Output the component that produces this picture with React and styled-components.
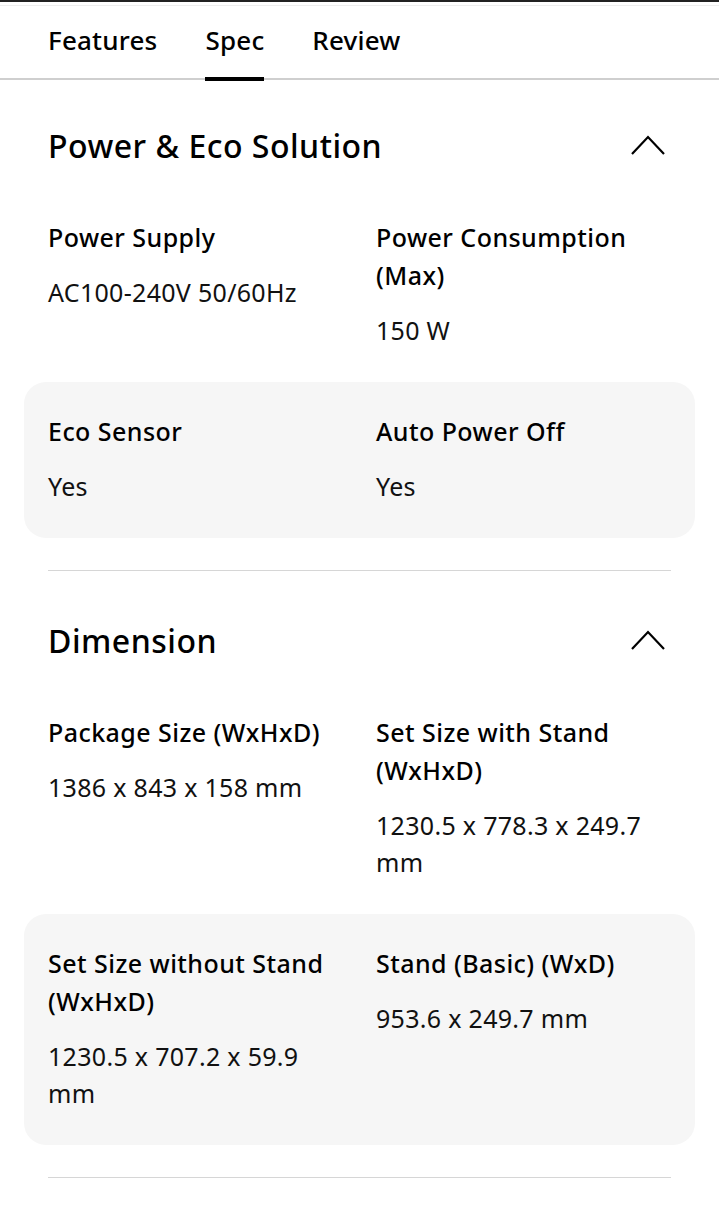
import React from "react";
import styled, { createGlobalStyle } from "styled-components";

const GlobalStyle = createGlobalStyle`
    body {
        margin: 0;
        background: #fff;
        font-family: "Noto Sans", Roboto, sans-serif;
        color: #000;
    }
`;

const Page = styled.div`
    width: 719px;
    border-top: 2px solid #222;
`;

const TabBar = styled.nav`
    display: flex;
    gap: 48px;
    padding: 0 48px;
    height: 75px;
    margin-top: 3px;
    border-top: 1px solid #eeeeee;
    border-bottom: 2px solid #cfcfcf;
    box-sizing: border-box;
`;

const Tab = styled.div`
    position: relative;
    display: flex;
    align-items: center;
    padding-bottom: 4px;
    font-size: 26px;
    font-weight: 500;
    letter-spacing: 0.2px;
    color: #000;

    &::after {
        content: "";
        display: ${p => (p.$active ? "block" : "none")};
        position: absolute;
        left: 0;
        right: 0;
        bottom: -3px;
        height: 4px;
        background: #000;
    }
`;

const Content = styled.div`
    padding: 43px 24px 0;
`;

const Section = styled.section`
    padding-bottom: 32px;
    border-bottom: 1px solid #d6d6d6;
    margin: 0 24px 47px;
    &:last-child {
        margin-bottom: 0;
    }
`;

const SectionInner = styled.div`
    margin: 0 -24px;
`;

const Header = styled.div`
    display: flex;
    align-items: center;
    justify-content: space-between;
    height: 44px;
    padding: 0 30px 0 24px;
    margin-bottom: 21px;
`;

const Title = styled.h2`
    margin: 0;
    font-size: 32px;
    font-weight: 500;
    letter-spacing: 0.5px;
`;

const Row = styled.div`
    display: grid;
    grid-template-columns: 1fr 1fr;
    column-gap: 33px;
    padding: 30px 24px 33px;
    border-radius: 22px;
    background: ${p => (p.$shaded ? "#f6f6f6" : "transparent")};
`;

const Spec = styled.div`
    display: flex;
    flex-direction: column;
    gap: 18px;
`;

const Label = styled.div`
    font-size: 25px;
    font-weight: 500;
    line-height: 38px;
    letter-spacing: 0.45px;
`;

const Value = styled.div`
    font-size: 25px;
    font-weight: 400;
    line-height: 37px;
    letter-spacing: 0.3px;
    color: #111;
`;

const Chevron = () => (
    <svg width="34" height="20" viewBox="0 0 34 20" fill="none">
        <path d="M1 19 L17 2 L33 19" stroke="#000" strokeWidth="2.2" />
    </svg>
);

const sections = [
    {
        title: "Power & Eco Solution",
        rows: [
            [
                ["Power Supply", "AC100-240V 50/60Hz"],
                ["Power Consumption (Max)", "150 W"],
            ],
            [
                ["Eco Sensor", "Yes"],
                ["Auto Power Off", "Yes"],
            ],
        ],
    },
    {
        title: "Dimension",
        rows: [
            [
                ["Package Size (WxHxD)", "1386 x 843 x 158 mm"],
                ["Set Size with Stand (WxHxD)", "1230.5 x 778.3 x 249.7 mm"],
            ],
            [
                ["Set Size without Stand (WxHxD)", "1230.5 x 707.2 x 59.9 mm"],
                ["Stand (Basic) (WxD)", "953.6 x 249.7 mm"],
            ],
        ],
    },
];

export default function App() {
    return (
        <Page>
            <GlobalStyle />
            <TabBar>
                <Tab>Features</Tab>
                <Tab $active>Spec</Tab>
                <Tab>Review</Tab>
            </TabBar>
            <Content>
                {sections.map(section => (
                    <Section key={section.title}>
                        <SectionInner>
                            <Header>
                                <Title>{section.title}</Title>
                                <Chevron />
                            </Header>
                            {section.rows.map((row, i) => (
                                <Row key={i} $shaded={i % 2 === 1}>
                                    {row.map(([label, value]) => (
                                        <Spec key={label}>
                                            <Label>{label}</Label>
                                            <Value>{value}</Value>
                                        </Spec>
                                    ))}
                                </Row>
                            ))}
                        </SectionInner>
                    </Section>
                ))}
            </Content>
        </Page>
    );
}
